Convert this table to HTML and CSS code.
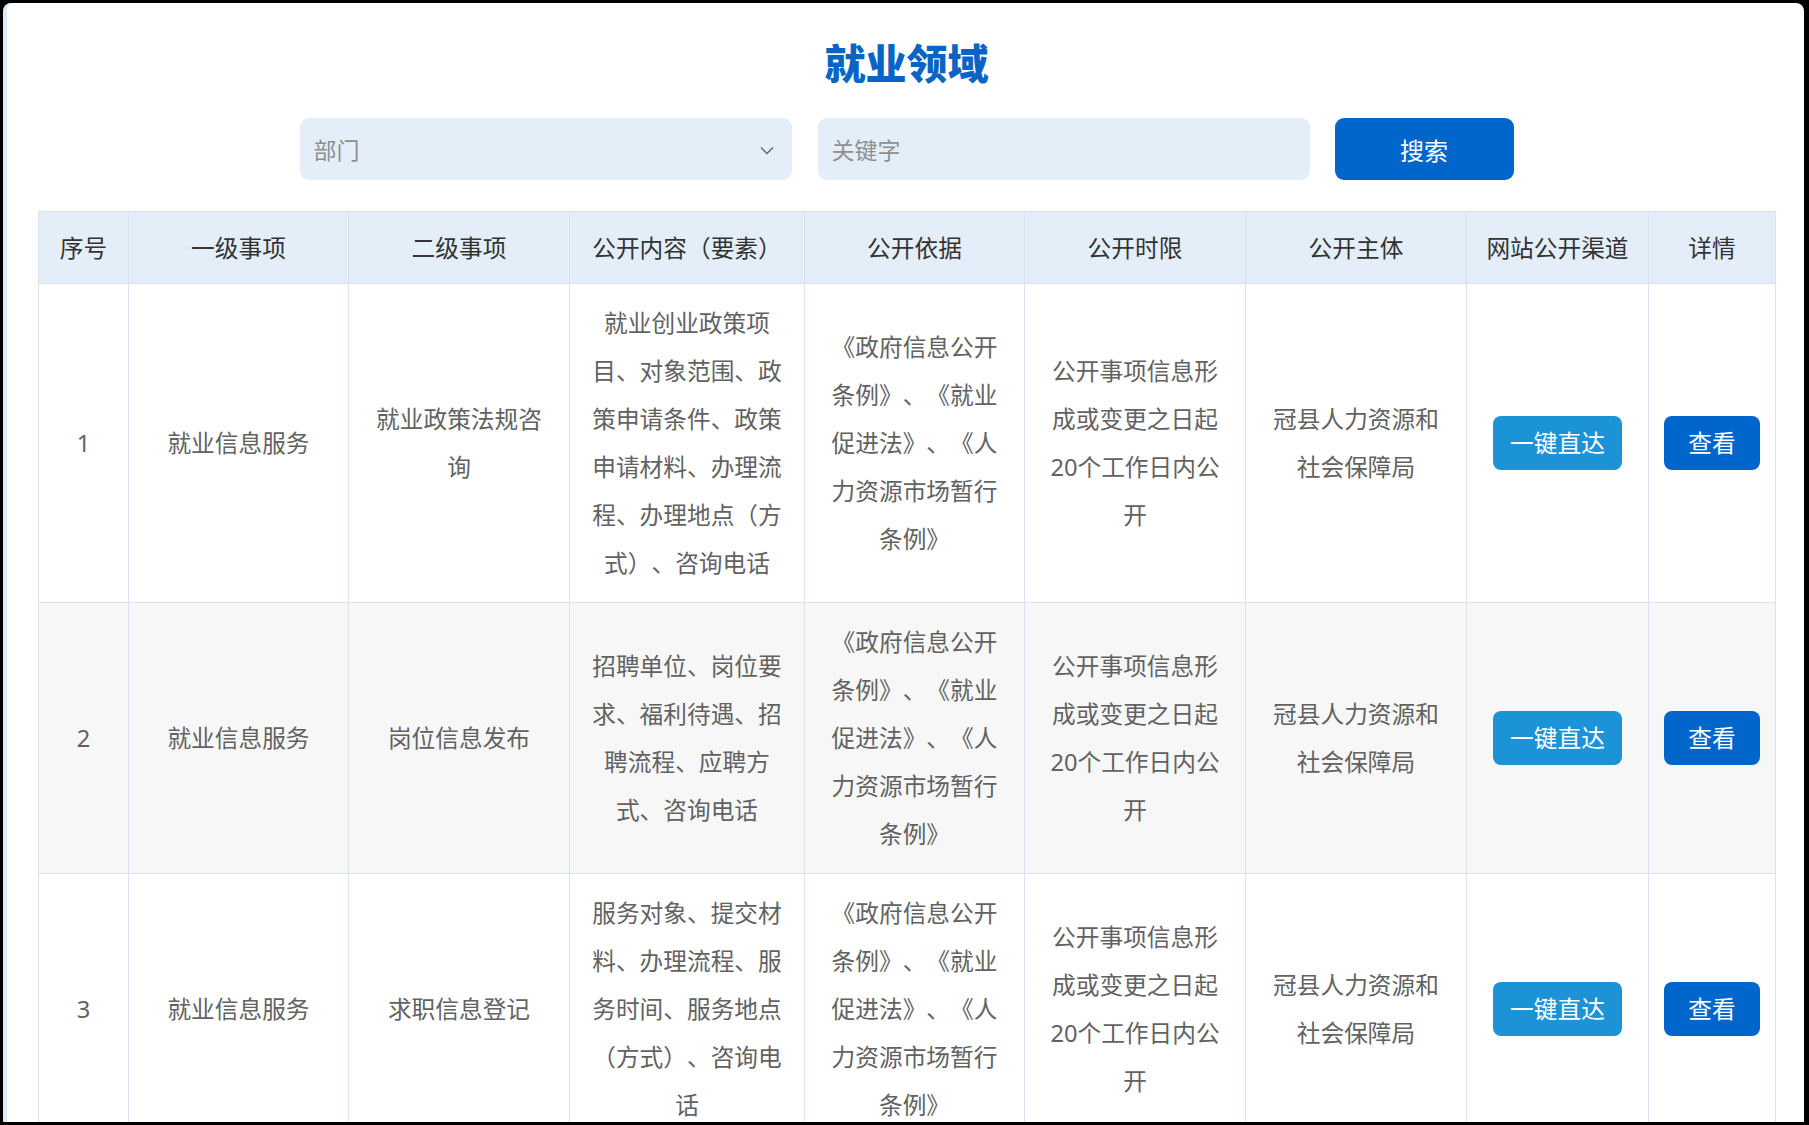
FILE: index.html
```html
<!DOCTYPE html>
<html lang="zh-CN">
<head>
<meta charset="utf-8">
<title>就业领域</title>
<link rel="stylesheet" href="styles.css">
</head>
<body>
<div class="frame">
  <h1 class="title">就业领域</h1>
  <div class="search">
    <div class="field select">
      <span class="placeholder">部门</span>
      <svg class="chev" width="14" height="9" viewBox="0 0 14 9"><path d="M1 1.5 L7 7.5 L13 1.5" fill="none" stroke="#666" stroke-width="1.4"/></svg>
    </div>
    <div class="field input"><span class="placeholder">关键字</span></div>
    <button class="btn-search">搜索</button>
  </div>
  <table class="list">
    <colgroup>
      <col class="c1"><col class="c2"><col class="c3"><col class="c4"><col class="c5"><col class="c6"><col class="c7"><col class="c8"><col class="c9">
    </colgroup>
    <thead>
      <tr><th>序号</th><th>一级事项</th><th>二级事项</th><th>公开内容（要素）</th><th>公开依据</th><th>公开时限</th><th>公开主体</th><th>网站公开渠道</th><th>详情</th></tr>
    </thead>
    <tbody>
      <tr>
        <td>1</td>
        <td>就业信息服务</td>
        <td>就业政策法规咨询</td>
        <td>就业创业政策项目、对象范围、政策申请条件、政策申请材料、办理流程、办理地点（方式）、咨询电话</td>
        <td>《政府信息公开条例》、《就业促进法》、《人力资源市场暂行条例》</td>
        <td>公开事项信息形成或变更之日起20个工作日内公开</td>
        <td>冠县人力资源和社会保障局</td>
        <td><span class="btn btn-go">一键直达</span></td>
        <td><span class="btn btn-view">查看</span></td>
      </tr>
      <tr class="alt">
        <td>2</td>
        <td>就业信息服务</td>
        <td>岗位信息发布</td>
        <td>招聘单位、岗位要求、福利待遇、招聘流程、应聘方式、咨询电话</td>
        <td>《政府信息公开条例》、《就业促进法》、《人力资源市场暂行条例》</td>
        <td>公开事项信息形成或变更之日起20个工作日内公开</td>
        <td>冠县人力资源和社会保障局</td>
        <td><span class="btn btn-go">一键直达</span></td>
        <td><span class="btn btn-view">查看</span></td>
      </tr>
      <tr>
        <td>3</td>
        <td>就业信息服务</td>
        <td>求职信息登记</td>
        <td>服务对象、提交材料、办理流程、服务时间、服务地点（方式）、咨询电话</td>
        <td>《政府信息公开条例》、《就业促进法》、《人力资源市场暂行条例》</td>
        <td>公开事项信息形成或变更之日起20个工作日内公开</td>
        <td>冠县人力资源和社会保障局</td>
        <td><span class="btn btn-go">一键直达</span></td>
        <td><span class="btn btn-view">查看</span></td>
      </tr>
    </tbody>
  </table>
</div>
</body>
</html>
```
FILE: styles.css
```css
html, body {
  margin: 0;
  padding: 0;
  height: 100%;
  background: #000;
  overflow: hidden;
}
body {
  font-family: "Noto Sans", "Noto Sans CJK SC", sans-serif;
  padding: 3px 5px 3px 3px;
  box-sizing: border-box;
  text-spacing-trim: space-all;
  font-kerning: none;
}
.frame {
  height: 100%;
  box-sizing: border-box;
  background: #fff;
  border-left: 4px solid #dbe8f7;
  border-radius: 8px 8px 0 0;
  overflow: hidden;
  padding: 0 29px 0 31px;
}
.title {
  margin: 0;
  height: 115px;
  padding-top: 32px;
  box-sizing: border-box;
  text-align: center;
  font-family: "Noto Sans CJK SC", sans-serif;
  font-size: 41px;
  line-height: 52px;
  font-weight: 900;
  color: #0a64c6;
}
.search {
  display: flex;
  justify-content: center;
  align-items: center;
  gap: 26px;
  height: 62px;
  margin-bottom: 31px;
}
.field {
  width: 492px;
  height: 62px;
  box-sizing: border-box;
  background: #e4eef9;
  border-radius: 9px;
  display: flex;
  align-items: center;
  justify-content: space-between;
  padding: 0 18px 0 14px;
}
.placeholder {
  font-size: 23px;
  color: #8f8f8f;
}
.chev { margin-top: 2px; }
.btn-search {
  width: 179px;
  height: 62px;
  margin-left: -1px;
  border: 0;
  border-radius: 9px;
  background: #0066cc;
  color: #fff;
  font-family: "Noto Sans CJK SC", sans-serif;
  font-size: 24px;
  padding: 0;
}
.list {
  width: 1737px;
  table-layout: fixed;
  border-collapse: collapse;
  font-size: 23.7px;
}
.c1 { width: 90px; }
.c2 { width: 220px; }
.c3 { width: 221px; }
.c4 { width: 235px; }
.c5 { width: 220px; }
.c6 { width: 221px; }
.c7 { width: 221px; }
.c8 { width: 182px; }
.c9 { width: 127px; }
.list th, .list td {
  border: 1px solid #d6e4f4;
  text-align: center;
  vertical-align: middle;
  line-height: 48px;
}
.list th {
  background: #e4eef9;
  color: #333;
  font-weight: 400;
  padding: 12px 4px 11px;
  white-space: nowrap;
}
.list td {
  color: #626262;
  padding: 15px 16px;
}
.list tr.alt td { background: #f7f7f7; }
.btn {
  display: inline-flex;
  align-items: center;
  justify-content: center;
  height: 54px;
  border-radius: 8px;
  color: #fff;
  font-size: 23.7px;
  vertical-align: middle;
}
.btn-go { width: 129px; background: #1c93d7; }
.btn-view { width: 96px; background: #0066cc; }
.list td:nth-child(8), .list td:nth-child(9) { padding-left: 4px; padding-right: 4px; }
```
